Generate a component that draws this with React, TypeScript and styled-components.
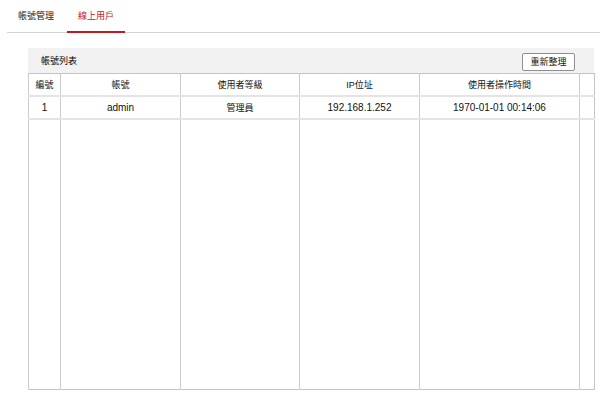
import React from 'react';
import styled, { createGlobalStyle } from 'styled-components';

const GlobalStyle = createGlobalStyle`
  html, body {
    margin: 0;
    padding: 0;
    background: #fff;
  }
  body {
    font-family: "Liberation Sans", Arial, "Noto Sans CJK TC", sans-serif;
    font-size: 10px;
    color: #222;
  }
`;

const Page = styled.div`
  width: 600px;
  height: 404px;
  overflow: hidden;
`;

const TabBar = styled.ul`
  list-style: none;
  margin: 0 0 0 7px;
  padding: 0;
  display: flex;
  gap: 2px;
  height: 32px;
  border-bottom: 1px solid #d2d2d2;
`;

const Tab = styled.li<{ $active?: boolean }>`
  padding: 0 11px;
  font-size: 9px;
  line-height: 33px;
  height: 31px;
  color: ${p => (p.$active ? '#c8161d' : '#222')};
  border-bottom: 2px solid ${p => (p.$active ? '#c8161d' : 'transparent')};
  cursor: pointer;
`;

const Panel = styled.section`
  margin: 15px 0 0 28px;
  width: 566px;
`;

const PanelHeader = styled.div`
  height: 25px;
  background: #f2f2f2;
  display: flex;
  align-items: center;
  justify-content: space-between;
  padding: 0 19px 0 13px;
`;

const PanelTitle = styled.span`
  font-size: 9px;
  color: #000;
`;

const Button = styled.button`
  font-family: inherit;
  font-size: 9px;
  color: #111;
  height: 18px;
  width: 53px;
  padding: 0;
  margin-top: 2px;
  background: #fff;
  border: 1px solid #8f8f8f;
  border-radius: 2px;
`;

const Table = styled.table`
  width: 566px;
  height: 317px;
  border-collapse: collapse;
  table-layout: fixed;
  border: 1px solid #c4c4c4;
`;

const Cell = styled.td<{ $cjk?: boolean }>`
  text-align: center;
  border-left: 1px solid #cdcdcd;
  border-bottom: 2px solid #e4e4e4;
  height: 21px;
  padding: 0;
  color: #111;
  font-size: ${p => (p.$cjk ? '9px' : '10px')};
  white-space: nowrap;
`;

const HeadCell = styled(Cell).attrs({ as: 'th' })`
  font-weight: normal;
`;

const FillCell = styled.td`
  border-left: 1px solid #cdcdcd;
  padding: 0;
`;

const columns = [
  { title: '編號', width: 32 },
  { title: '帳號', width: 120 },
  { title: '使用者等級', width: 119 },
  { title: 'IP位址', width: 120 },
  { title: '使用者操作時間', width: 160 },
  { title: '', width: 15 },
];

const rows = [['1', 'admin', '管理員', '192.168.1.252', '1970-01-01 00:14:06', '']];

const isCjk = (v: string) => /[\u4e00-\u9fff]/.test(v);

export default function App() {
  return (
    <Page>
      <GlobalStyle />
      <TabBar>
        <Tab>帳號管理</Tab>
        <Tab $active>線上用戶</Tab>
      </TabBar>
      <Panel>
        <PanelHeader>
          <PanelTitle>帳號列表</PanelTitle>
          <Button>重新整理</Button>
        </PanelHeader>
        <Table>
          <colgroup>
            {columns.map((c, i) => (
              <col key={i} style={{ width: c.width }} />
            ))}
          </colgroup>
          <thead>
            <tr>
              {columns.map((c, i) => (
                <HeadCell key={i} $cjk>{c.title}</HeadCell>
              ))}
            </tr>
          </thead>
          <tbody>
            {rows.map((r, ri) => (
              <tr key={ri}>
                {r.map((v, ci) => (
                  <Cell key={ci} $cjk={isCjk(v)}>{v}</Cell>
                ))}
              </tr>
            ))}
            <tr>
              {columns.map((_, i) => (
                <FillCell key={i} />
              ))}
            </tr>
          </tbody>
        </Table>
      </Panel>
    </Page>
  );
}
